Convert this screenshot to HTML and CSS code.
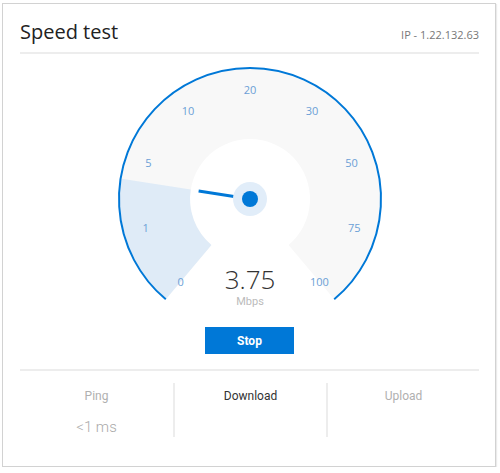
FILE: index.html
```html
<!DOCTYPE html>
<html lang="en">
<head>
    <meta charset="UTF-8">
    <meta name="viewport" content="width=device-width, initial-scale=1.0">
    <title>Speed test</title>
    <link rel="stylesheet" href="styles.css">
</head>
<body>
    <div class="card">
        <div class="header">
            <h1>Speed test</h1>
            <span class="ip">IP - 1.22.132.63</span>
        </div>

        <svg class="gauge" width="280" height="250" viewBox="0 0 280 250">
            <!-- dial background, 40deg to 320deg measured from the bottom -->
            <path class="dial" d="M 56.44 239.58 A 130 130 0 1 1 223.56 239.58 L 178.57 185.96 A 60 60 0 1 0 101.43 185.96 Z"/>
            <!-- progress up to the needle -->
            <path class="progress" d="M 56.44 239.58 A 130 130 0 0 1 11.6 119.66 L 80.74 130.61 A 60 60 0 0 0 101.43 185.96 Z"/>
            <path class="rim" d="M 55.8 240.35 A 131 131 0 1 1 224.2 240.35"/>

            <g class="ticks">
                <text x="70.6" y="222.7">0</text>
                <text x="35.7" y="168">1</text>
                <text x="38.5" y="103">5</text>
                <text x="78" y="51">10</text>
                <text x="140" y="30">20</text>
                <text x="202" y="51">30</text>
                <text x="241.5" y="103">50</text>
                <text x="244.3" y="168">75</text>
                <text x="209.4" y="222.7">100</text>
            </g>

            <line class="needle" x1="140" y1="140" x2="88.6" y2="131.9"/>
            <circle class="hub-halo" cx="140" cy="140" r="17"/>
            <circle class="hub" cx="140" cy="140" r="8"/>

            <text class="value" x="140" y="230">3.75</text>
            <text class="unit" x="140" y="246">Mbps</text>
        </svg>

        <button class="stop">Stop</button>

        <div class="stats">
            <div class="stat">
                <div class="stat-label">Ping</div>
                <div class="stat-value">&lt;1 ms</div>
            </div>
            <div class="stat active">
                <div class="stat-label">Download</div>
                <div class="stat-value"></div>
            </div>
            <div class="stat">
                <div class="stat-label">Upload</div>
                <div class="stat-value"></div>
            </div>
        </div>
    </div>
</body>
</html>
```

FILE: styles.css
```css
body {
    margin: 0;
    background: #fff;
    font-family: "Open Sans", "Noto Sans", sans-serif;
    color: #333;
}

.card {
    box-sizing: border-box;
    width: 494px;
    height: 464px;
    margin: 3px 0 0 2px;
    padding: 0 16px 0 17px;
    border: 1px solid #d2d2d2;
    box-shadow: 1px 1px 1px rgba(0, 0, 0, 0.08);
}

.header {
    display: flex;
    justify-content: space-between;
    align-items: baseline;
    padding: 14px 0 6px;
    border-bottom: 2px solid #ededed;
}

h1 {
    margin: 0;
    font-size: 20px;
    line-height: 28px;
    font-weight: 400;
    color: #222;
}

.ip {
    font-size: 11px;
    color: #777;
}

.gauge {
    display: block;
    margin: 5px auto 0;
}

.dial {
    fill: #f8f8f8;
}

.progress {
    fill: #dfebf7;
}

.rim {
    fill: none;
    stroke: #0078d7;
    stroke-width: 2;
}

.ticks text {
    font-size: 11px;
    fill: #6b9fd6;
    text-anchor: middle;
    dominant-baseline: central;
}

.needle {
    stroke: #0078d7;
    stroke-width: 3;
}

.hub-halo {
    fill: #e1edf9;
}

.hub {
    fill: #0078d7;
}

.value {
    font-size: 26px;
    font-weight: 300;
    fill: #333;
    text-anchor: middle;
}

.unit {
    font-family: Roboto, sans-serif;
    font-size: 11px;
    fill: #bbb;
    text-anchor: middle;
}

.stop {
    display: block;
    width: 89px;
    height: 27px;
    margin: 18px auto 0;
    padding: 0;
    border: none;
    background: #0078d7;
    color: #fff;
    font-family: Roboto, sans-serif;
    font-size: 12px;
    font-weight: 700;
}

.stats {
    display: grid;
    grid-template-columns: repeat(3, 1fr);
    margin-top: 15px;
    padding-top: 12px;
    border-top: 2px solid #ededed;
    font-family: Roboto, sans-serif;
    text-align: center;
}

.stat {
    padding-top: 5px;
    height: 49px;
}

.stat + .stat {
    border-left: 2px solid #ededed;
}

.stat-label {
    font-size: 12px;
    line-height: 16px;
    color: #b0b0b0;
}

.active .stat-label {
    color: #333;
}

.stat-value {
    margin-top: 13px;
    font-size: 15px;
    font-weight: 300;
    line-height: 20px;
    color: #aaa;
}
```
